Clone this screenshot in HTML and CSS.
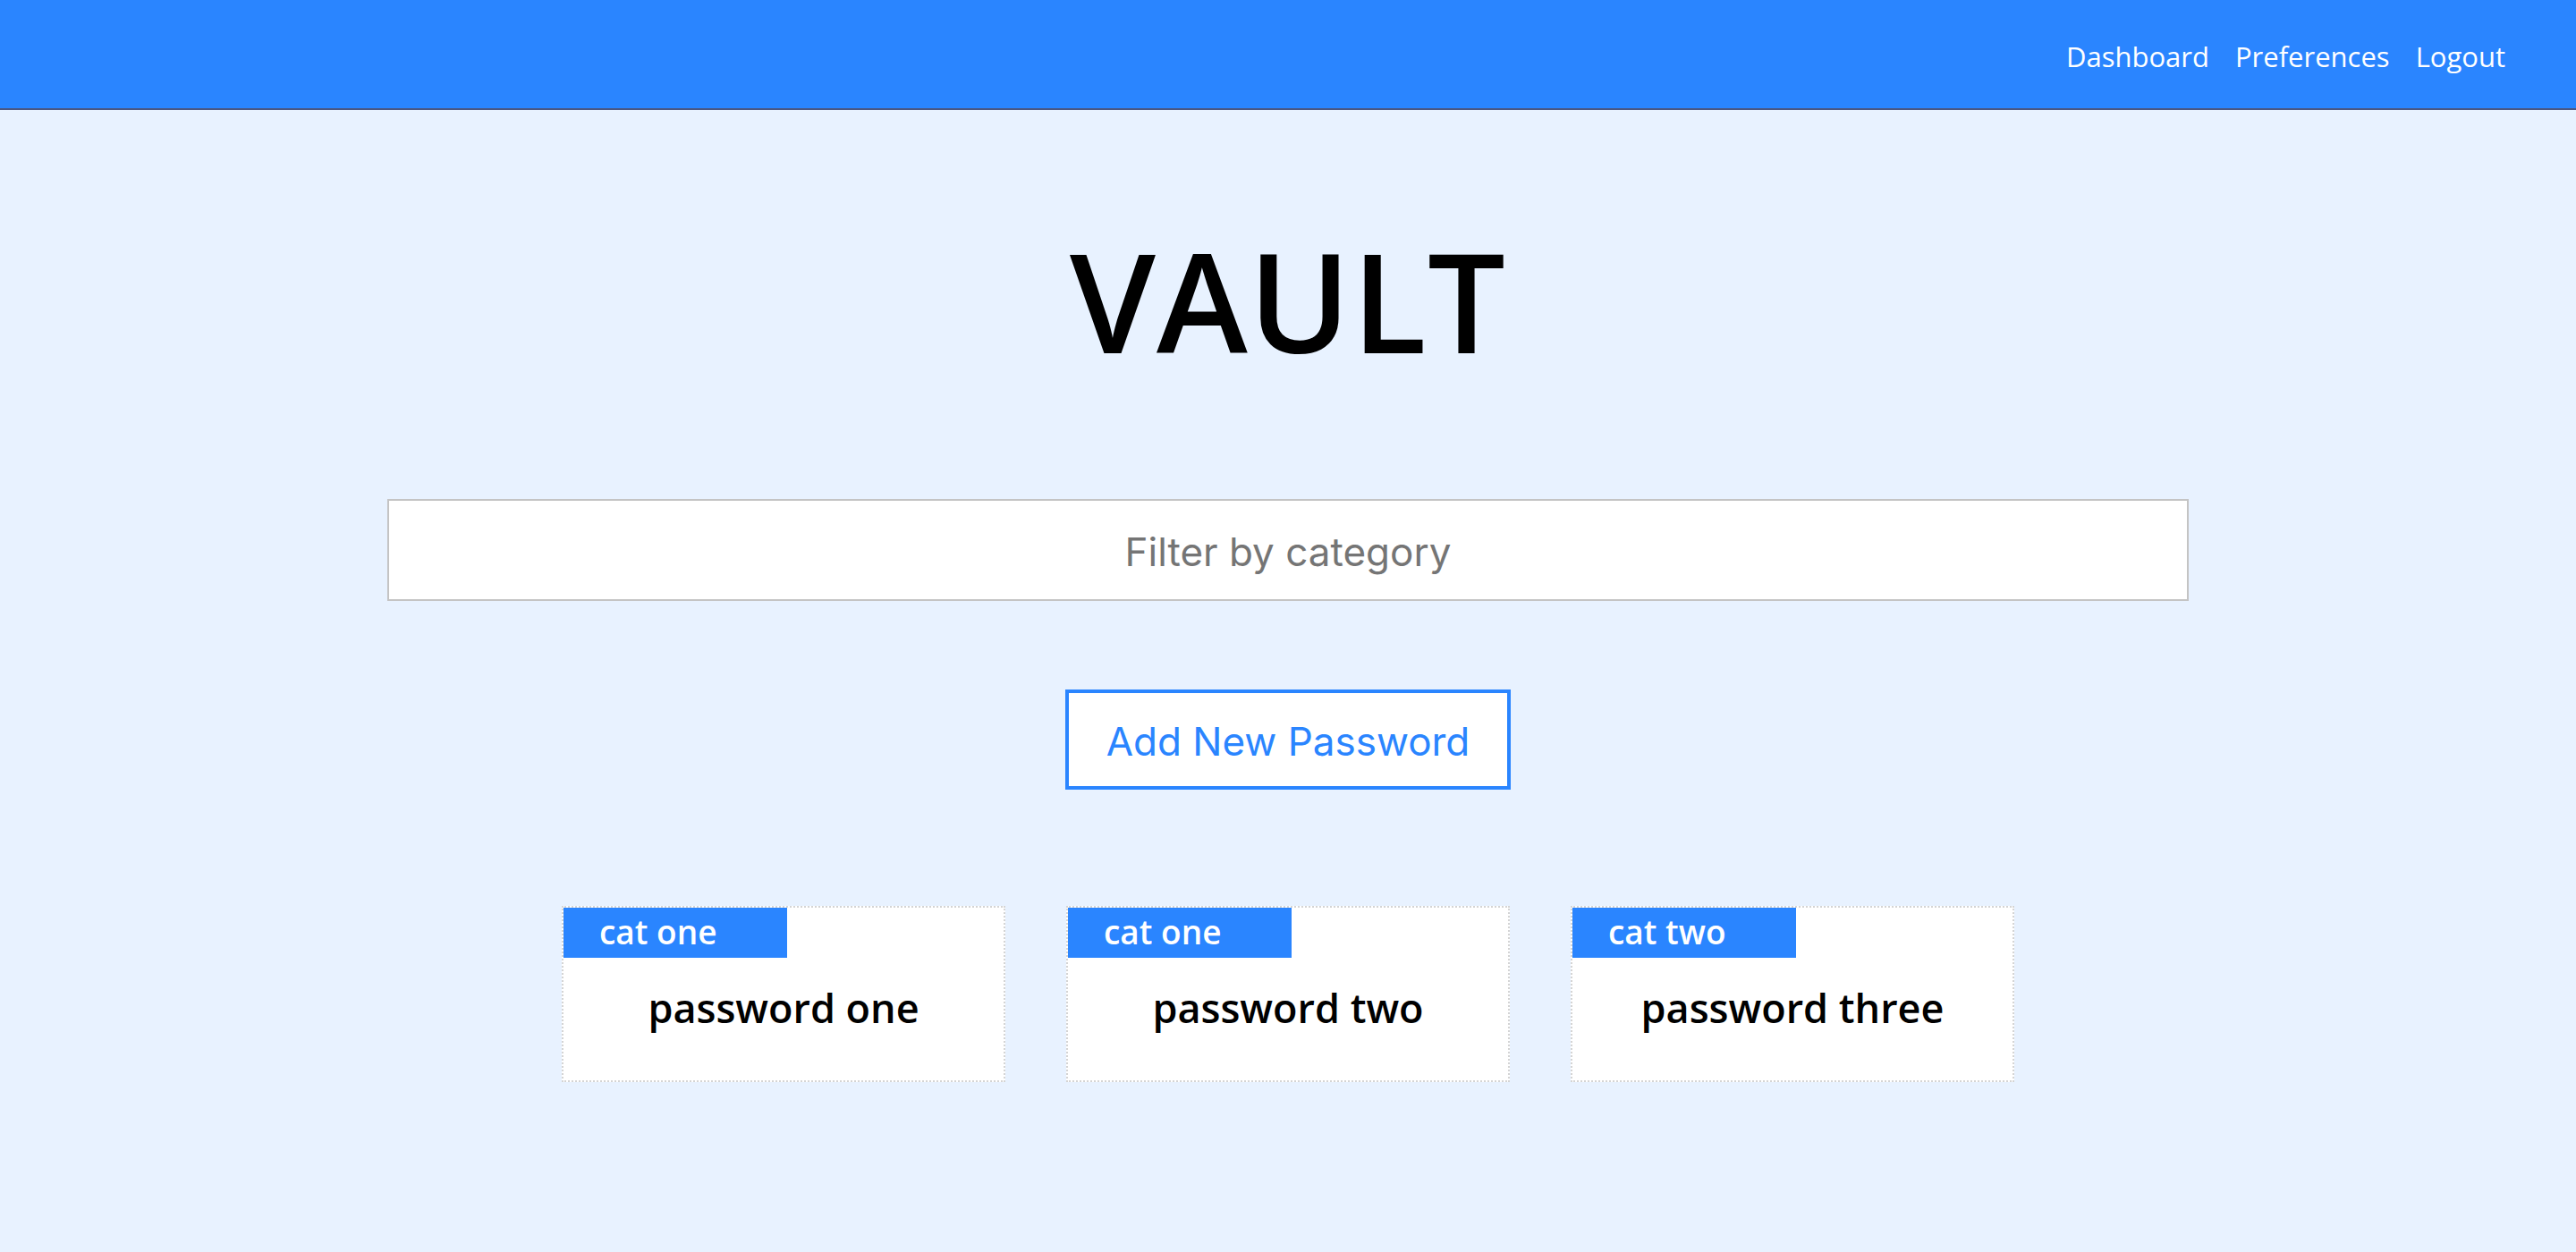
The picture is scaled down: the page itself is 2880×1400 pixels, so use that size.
FILE: index.html
```html
<!DOCTYPE html>
<html lang="en">
<head>
<meta charset="utf-8">
<title>Vault</title>
<link rel="stylesheet" href="styles.css">
</head>
<body>
<nav class="navbar">
  <a class="nav-link" href="#">Dashboard</a>
  <a class="nav-link" href="#">Preferences</a>
  <a class="nav-link" href="#">Logout</a>
</nav>
<main class="main">
  <h1 class="title">VAULT</h1>
  <input class="filter" type="text" placeholder="Filter by category">
  <button class="add-btn" type="button">Add New Password</button>
  <section class="cards">
    <div class="card">
      <div class="card-cat">cat one</div>
      <div class="card-name">password one</div>
    </div>
    <div class="card">
      <div class="card-cat">cat one</div>
      <div class="card-name">password two</div>
    </div>
    <div class="card">
      <div class="card-cat">cat two</div>
      <div class="card-name">password three</div>
    </div>
  </section>
</main>
</body>
</html>
```
FILE: styles.css
```css
html, body {
  margin: 0;
  padding: 0;
}
body {
  background: #e8f2ff;
  font-family: "Open Sans", "Noto Sans", sans-serif;
  color: #000;
  min-height: 1400px;
}
.navbar {
  box-sizing: border-box;
  height: 123px;
  background: #2a85ff;
  border-bottom: 2px solid #4b5782;
  display: flex;
  justify-content: flex-end;
  align-items: center;
  gap: 29px;
  padding: 4px 79px 0 0;
}
.nav-link {
  color: #fff;
  text-decoration: none;
  font-size: 31px;
  line-height: 40px;
}
.main {
  display: flex;
  flex-direction: column;
  align-items: center;
}
.title {
  margin: 118px 0 0;
  font-size: 154px;
  line-height: 188px;
  font-weight: 600;
  letter-spacing: 1px;
}
.filter {
  margin-top: 129px;
  width: 2014px;
  height: 114px;
  box-sizing: border-box;
  border: 2px solid #c4c4c4;
  background: #fff;
  text-align: center;
  font-family: Inter, "Liberation Sans", sans-serif;
  font-size: 44px;
  color: #333;
  outline: none;
  padding: 4px 0 0;
}
.filter::placeholder {
  color: #757575;
}
.add-btn {
  margin-top: 99px;
  width: 498px;
  height: 112px;
  box-sizing: border-box;
  border: 4px solid #2a85ff;
  background: #fff;
  color: #2a85ff;
  font-family: Inter, "Liberation Sans", sans-serif;
  font-size: 44px;
  padding: 4px 0 0;
}
.cards {
  margin-top: 130px;
  display: flex;
  gap: 68px;
  justify-content: center;
}
.card {
  width: 496px;
  height: 197px;
  box-sizing: border-box;
  border: 2px dotted #d4d4d4;
  background: #fff;
}
.card-cat {
  width: 250px;
  height: 56px;
  box-sizing: border-box;
  padding-left: 40px;
  background: #2a85ff;
  color: #fff;
  font-size: 37px;
  font-weight: 600;
  line-height: 54px;
}
.card-name {
  margin-top: 26px;
  text-align: center;
  font-size: 45px;
  font-weight: 600;
  line-height: 60px;
}
```
